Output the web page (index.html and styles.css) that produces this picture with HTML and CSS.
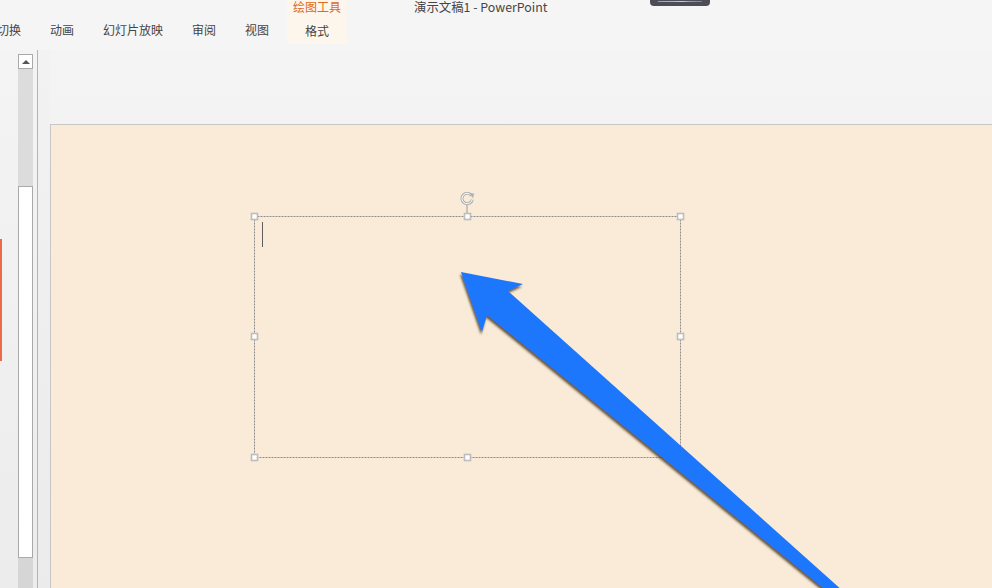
FILE: index.html
```html
<!DOCTYPE html>
<html lang="zh-CN">
<head>
<meta charset="utf-8">
<title>演示文稿1 - PowerPoint</title>
<link rel="stylesheet" href="styles.css">
</head>
<body>
<div class="app">
  <header class="ribbon">
    <div class="title">演示文稿1 - PowerPoint</div>
    <div class="pill"><span class="pill-bar"></span></div>
    <nav class="tabs">
      <span class="tab tab-first">切换</span>
      <span class="tab">动画</span>
      <span class="tab">幻灯片放映</span>
      <span class="tab">审阅</span>
      <span class="tab">视图</span>
      <div class="ctx">
        <span class="ctx-label">绘图工具</span>
        <span class="ctx-tab">格式</span>
      </div>
    </nav>
  </header>
  <main class="work">
    <aside class="thumbs"><span class="sel-bar"></span></aside>
    <div class="vscroll">
      <div class="vs-btn"><span class="vs-arrow"></span></div>
      <div class="vs-track-top"></div>
      <div class="vs-thumb"></div>
      <div class="vs-track-bot"></div>
    </div>
    <div class="split"></div>
    <section class="stage">
      <div class="slide">
        <div class="textbox">
          <svg class="frame" width="440" height="272" viewBox="-7 -24 440 272">
            <line x1="213" y1="-13" x2="213" y2="-3" stroke="#9a9a9a" stroke-width="1"/>
            <path d="M217.6 -20.2 A5.2 5.2 0 1 0 218.3 -16.6" fill="none" stroke="#b0b0b0" stroke-width="3"/>
            <path d="M217.6 -20.2 A5.2 5.2 0 1 0 218.3 -16.6" fill="none" stroke="#ffffff" stroke-width="1"/>
            <path d="M215.2 -22.8 L220.2 -22.4 L219 -17.8 Z" fill="#b0b0b0"/>
            <rect x="0.5" y="0.5" width="426" height="241" fill="none" stroke="#8c8c8c" stroke-width="1" stroke-dasharray="2 1"/>
            <g fill="#fff" stroke="#bdbdbd" stroke-width="1.6">
              <rect x="-2.5" y="-2.5" width="6" height="6"/>
              <rect x="210.5" y="-2.5" width="6" height="6"/>
              <rect x="423.5" y="-2.5" width="6" height="6"/>
              <rect x="-2.5" y="117.5" width="6" height="6"/>
              <rect x="423.5" y="117.5" width="6" height="6"/>
              <rect x="-2.5" y="238.5" width="6" height="6"/>
              <rect x="210.5" y="238.5" width="6" height="6"/>
              <rect x="423.5" y="238.5" width="6" height="6"/>
            </g>
          </svg>
          <span class="caret"></span>
        </div>
        <svg class="arrow" width="941" height="463" viewBox="51 125 941 463">
          <defs>
            <filter id="sh" x="-10%" y="-10%" width="130%" height="130%">
              <feDropShadow dx="-1" dy="2.5" stdDeviation="1.2" flood-color="#3e2f18" flood-opacity="0.8"/>
            </filter>
          </defs>
          <polygon filter="url(#sh)" fill="#1f77fc" points="461,272 523,284 508,291 853,600 838,600 487,315 482,332"/>
        </svg>
      </div>
    </section>
  </main>
</div>
</body>
</html>
```
FILE: styles.css
```css
* { box-sizing: border-box; }
html, body { margin: 0; padding: 0; }
body {
  width: 992px;
  height: 588px;
  overflow: hidden;
  background: #f4f4f4;
  font-family: "Noto Sans CJK SC", "Noto Sans", sans-serif;
  color: #444;
}
.app { width: 992px; height: 588px; display: flex; flex-direction: column; }

.ribbon {
  position: relative;
  height: 50px;
  flex: none;
  background: #f5f5f5;
}
.title {
  position: absolute;
  left: 414px;
  top: -2px;
  font-size: 12.4px;
  line-height: 18px;
  color: #454545;
}
.pill {
  position: absolute;
  left: 650px;
  top: 0;
  width: 60px;
  height: 6px;
  background: #4b4e58;
  border-radius: 0 0 4px 4px;
  display: flex;
  justify-content: center;
}
.pill-bar {
  width: 44px;
  height: 1px;
  margin-top: 1px;
  background: linear-gradient(90deg, #3fc9c9 0%, #8fd07a 35%, #e8d85a 55%, #9aa0aa 70%, #7c808a 100%);
}
.tabs {
  display: flex;
  align-items: flex-end;
  height: 44px;
}
.tab {
  font-size: 12px;
  line-height: 16px;
  padding-bottom: 6px;
  margin-right: 29px;
  white-space: nowrap;
}
.tab-first { margin-left: -3px; }
.tabs .tab:nth-child(5) { margin-right: 18px; }
.ctx {
  width: 60px;
  height: 44px;
  background: #fdf6ec;
  display: flex;
  flex-direction: column;
  align-items: center;
}
.ctx-label {
  font-size: 12px;
  line-height: 16px;
  color: #dc6a1c;
  margin-top: -1px;
}
.ctx-tab {
  font-size: 12px;
  line-height: 16px;
  margin-top: 8px;
}

.work {
  flex: 1;
  display: flex;
  background: linear-gradient(180deg, #f4f4f4 0%, #ececec 100%);
  min-height: 0;
}
.thumbs {
  width: 18px;
  flex: none;
  padding-top: 189px;
}
.sel-bar {
  display: block;
  width: 2px;
  height: 122px;
  background: #ea6a4c;
}
.vscroll {
  width: 15px;
  flex: none;
  padding-top: 4px;
  display: flex;
  flex-direction: column;
}
.vs-btn {
  height: 15px;
  background: #fff;
  border: 1px solid #a9a9a9;
  display: flex;
  align-items: center;
  justify-content: center;
}
.vs-arrow {
  width: 0;
  height: 0;
  border-left: 4px solid transparent;
  border-right: 4px solid transparent;
  border-bottom: 4px solid #555;
}
.vs-track-top { height: 117px; background: #dcdcdc; }
.vs-thumb {
  height: 372px;
  background: #fff;
  border: 1px solid #a9a9a9;
}
.vs-track-bot { flex: 1; background: #d6d6d6; }
.split {
  width: 13px;
  flex: none;
  margin-left: 4px;
  border-left: 1px solid #b4b4b4;
  background: linear-gradient(180deg, #f2f2f2 0%, #ebebeb 100%);
}
.stage {
  flex: 1;
  padding-top: 74px;
  min-width: 0;
  overflow: hidden;
}
.slide {
  position: relative;
  height: 500px;
  background: #f9ebd7;
  border-left: 1px solid #c6c6c6;
  border-top: 1px solid #c6c6c6;
  overflow: hidden;
}
.textbox {
  position: absolute;
  left: 196px;
  top: 67px;
  width: 440px;
  height: 272px;
}
.frame { display: block; }
.caret {
  position: absolute;
  left: 15px;
  top: 30px;
  width: 1px;
  height: 25px;
  background: #5e5e5e;
}
.arrow {
  position: absolute;
  left: 0;
  top: 0;
}
```
